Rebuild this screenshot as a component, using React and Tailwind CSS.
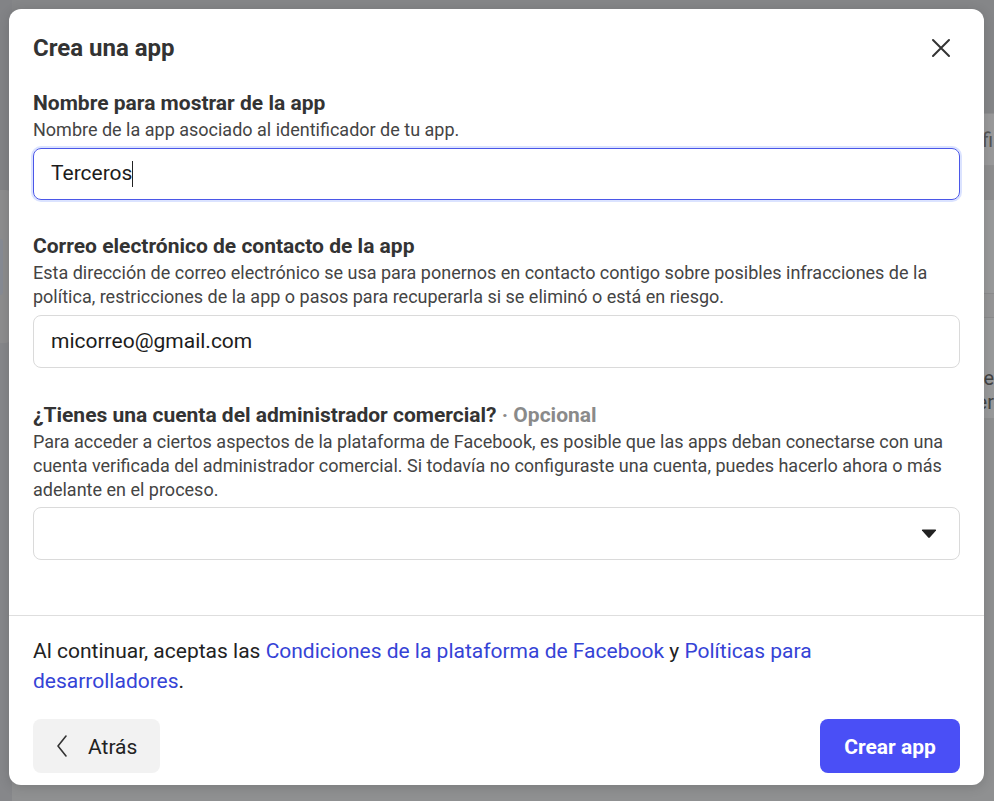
import React from 'react';

const font = { fontFamily: 'Roboto, "Noto Sans", sans-serif' };

const Field = ({ label, optional, description, children, inputGap = 'mt-[6px]' }) => (
  <div className="flex flex-col">
    <div className="text-[21px] leading-[26px] font-bold text-[#333]">
      {label}
      {optional && <span className="text-[#8a8a8a]"> · {optional}</span>}
    </div>
    <p className="mt-[2px] text-[18px] leading-[24px] text-[#444]">{description}</p>
    <div className={inputGap}>{children}</div>
  </div>
);

const App = () => {
  return (
    <div className="relative w-full h-[801px] overflow-hidden bg-[#86878a]" style={font}>
      {/* Page behind the overlay */}
      <div className="flex h-full">
        <div className="w-[12px] flex flex-col">
          <div className="h-[190px] bg-[#828386]" />
          <div className="h-[153px] bg-[#8d8d8e] rounded-r-[6px] flex flex-col justify-center">
            <div className="h-[56px] w-[3px] bg-[#878b94] rounded-r-[3px]" />
          </div>
          <div className="flex-1 bg-[#86878a]" />
        </div>
        <div className="flex-1 flex flex-col">
          <div className="h-[113px] bg-[#858688]" />
          <div className="h-[53px] bg-[#9a9a9b] border-y border-[#8f8f90] flex items-center justify-end pr-[1px] text-[20px] text-[#555]">fi</div>
          <div className="h-[34px] bg-[#8e8e8f]" />
          <div className="h-[93px] bg-[#999a9b]" />
          <div className="h-[25px] bg-[#969697] border-y border-[#8c8c8d]" />
          <div className="h-[100px] bg-[#999a9b] flex flex-col items-end justify-end pb-[4px] text-[20px] leading-[24px] text-[#444]">
            <span>e</span>
            <span>er</span>
          </div>
          <div className="flex-1 bg-[#8f9091]" />
        </div>
      </div>

      {/* Modal */}
      <div className="absolute inset-0 flex justify-center pt-[9px] pl-[9px] pr-[10px]">
        <div className="w-full h-[776px] bg-white rounded-[12px] shadow-[0_2px_12px_rgba(0,0,0,0.15)] flex flex-col">
          <div className="flex items-center justify-between pl-[24px] pr-[32px] pt-[24px]">
            <h1 className="text-[24px] leading-[30px] font-bold text-[#333]">Crea una app</h1>
            <button className="w-[22px] h-[22px] flex items-center justify-center text-[#333]">
              <svg width="20" height="20" viewBox="0 0 20 20" fill="none" stroke="currentColor" strokeWidth="2" strokeLinecap="round">
                <path d="M2 2 L18 18 M18 2 L2 18" />
              </svg>
            </button>
          </div>

          <div className="flex flex-col px-[24px] pt-[27px]">
            <Field
              label="Nombre para mostrar de la app"
              description="Nombre de la app asociado al identificador de tu app."
            >
              <div className="h-[52px] rounded-[8px] border border-[#4b57e8] shadow-[0_0_0_2px_#dbe3ff] flex items-center px-[17px] text-[21px] text-[#1c1c1c]">
                <span>Terceros</span>
                <span className="w-px h-[26px] bg-[#222]" />
              </div>
            </Field>

            <div className="mt-[33px]">
              <Field
                label="Correo electrónico de contacto de la app"
                description="Esta dirección de correo electrónico se usa para ponernos en contacto contigo sobre posibles infracciones de la política, restricciones de la app o pasos para recuperarla si se eliminó o está en riesgo."
              >
                <div className="h-[53px] rounded-[8px] border border-[#dadada] flex items-center px-[17px] text-[21px] text-[#1c1c1c]">
                  micorreo@gmail.com
                </div>
              </Field>
            </div>

            <div className="mt-[34px]">
              <Field
                label="¿Tienes una cuenta del administrador comercial?"
                optional="Opcional"
                inputGap="mt-[5px]"
                description="Para acceder a ciertos aspectos de la plataforma de Facebook, es posible que las apps deban conectarse con una cuenta verificada del administrador comercial. Si todavía no configuraste una cuenta, puedes hacerlo ahora o más adelante en el proceso."
              >
                <div className="h-[53px] rounded-[8px] border border-[#dadada] flex items-center justify-end pr-[22px]">
                  <svg width="16" height="10" viewBox="0 0 16 10" fill="#222">
                    <path d="M1 1.5 Q0.5 0.5 1.8 0.5 H14.2 Q15.5 0.5 15 1.5 L8.8 8.6 Q8 9.5 7.2 8.6 Z" />
                  </svg>
                </div>
              </Field>
            </div>
          </div>

          <div className="mt-auto border-t border-[#dedede] px-[24px] pt-[20px] pb-[12px]">
            <p className="text-[21px] leading-[30px] text-[#222]">
              Al continuar, aceptas las{' '}
              <a className="text-[#3543d6]">Condiciones de la plataforma de Facebook</a> y{' '}
              <a className="text-[#3543d6]">Políticas para desarrolladores</a>.
            </p>
            <div className="flex items-center justify-between mt-[23px]">
              <button className="h-[54px] w-[127px] pl-[23px] pt-[3px] rounded-[8px] bg-[#f2f2f2] flex items-center gap-[20px] text-[21px] text-[#222]">
                <svg className="-mt-[3px]" width="12" height="22" viewBox="0 0 12 22" fill="none" stroke="#333" strokeWidth="1.6" strokeLinecap="round" strokeLinejoin="round">
                  <path d="M10 1 L2 11 L10 21" />
                </svg>
                Atrás
              </button>
              <button className="h-[54px] w-[140px] pt-[3px] rounded-[8px] bg-[#4a4ff6] text-white text-[21px] font-bold">
                Crear app
              </button>
            </div>
          </div>
        </div>
      </div>
    </div>
  );
};

export default App;
